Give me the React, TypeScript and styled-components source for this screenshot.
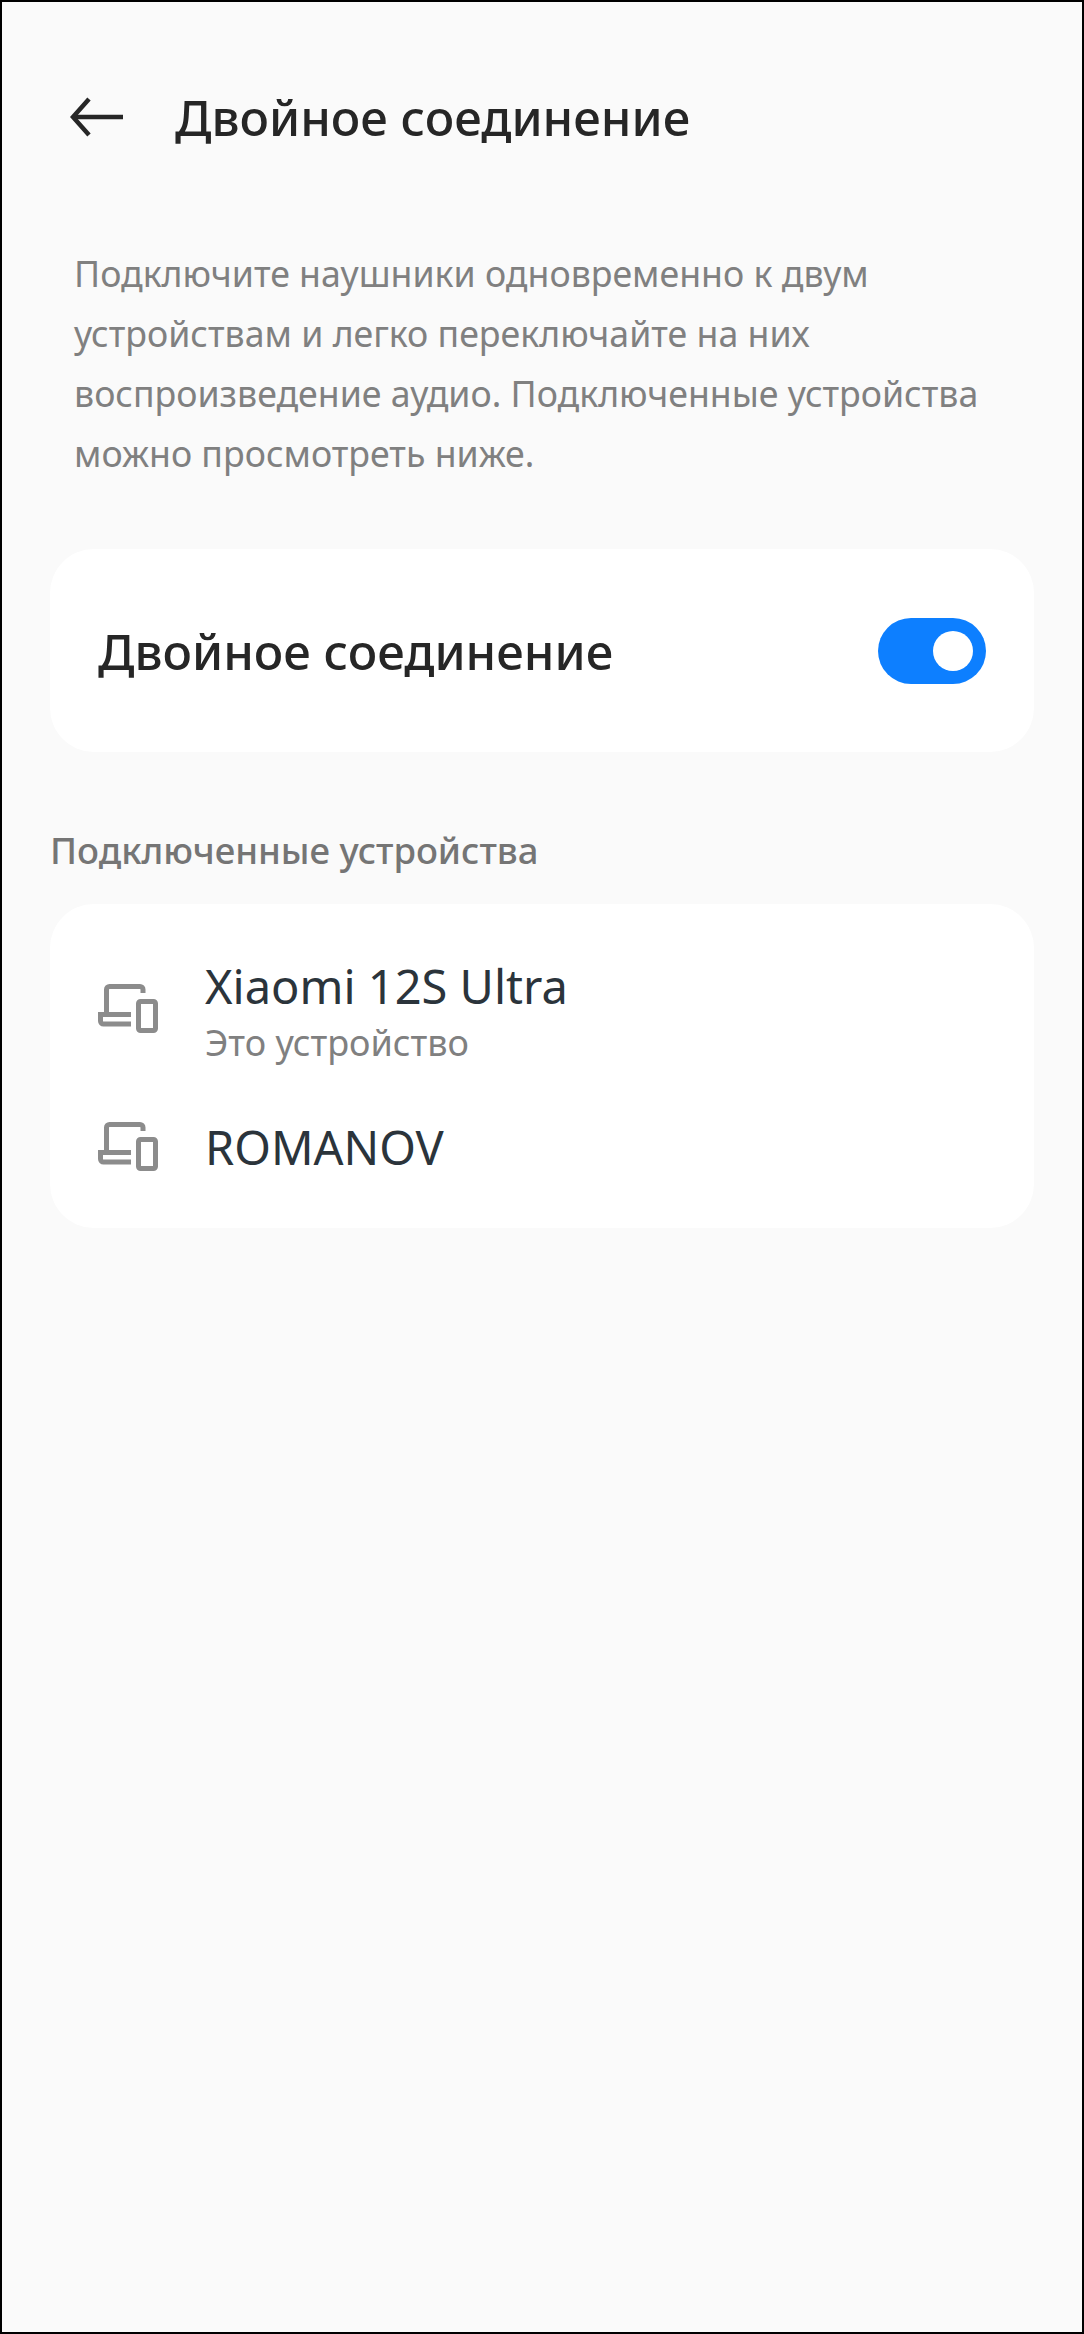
import styled, { createGlobalStyle } from 'styled-components';

const GlobalStyle = createGlobalStyle`
  html, body {
    margin: 0;
    padding: 0;
    background: #000;
  }
  * {
    box-sizing: border-box;
  }
`

const Screen = styled.div`
  width: 1084px;
  height: 2334px;
  border: 2px solid #000;
  background-color: #fafafa;
  font-family: "Noto Sans", "Open Sans", sans-serif;
  overflow: hidden;
`
const Header = styled.header`
  display: flex;
  align-items: center;
  height: 62px;
  margin-top: 84px;
  padding-left: 68px;
`
const BackIcon = styled.svg`
  width: 54px;
  height: 40px;
  margin-right: 51px;
  flex: none;
`
const Title = styled.h1`
  margin: 0;
  font-size: 49px;
  line-height: 62px;
  font-weight: 500;
  color: #262626;
`
const Description = styled.p`
  margin: 95px 0 0;
  padding: 0 50px 0 72px;
  font-size: 35.7px;
  line-height: 60px;
  font-weight: 400;
  color: #808080;
`
const Card = styled.section`
  margin: 0 48px;
  background-color: #fff;
  border-radius: 44px;
`
const SwitchCard = styled(Card)`
  display: flex;
  align-items: center;
  justify-content: space-between;
  height: 203px;
  margin-top: 66px;
  padding: 0 48px;
`
const SwitchLabel = styled.span`
  font-size: 49px;
  font-weight: 500;
  color: #262626;
`
const Toggle = styled.div`
  display: flex;
  align-items: center;
  justify-content: flex-end;
  width: 108px;
  height: 66px;
  padding-right: 13px;
  border-radius: 33px;
  background-color: #0d7fff;
`
const Knob = styled.div`
  width: 40px;
  height: 40px;
  border-radius: 50%;
  background-color: #fff;
`
const SectionLabel = styled.h2`
  margin: 73px 0 29px;
  padding-left: 48px;
  font-size: 36.5px;
  line-height: 50px;
  font-weight: 500;
  color: #757575;
`
const DeviceCard = styled(Card)`
  display: flex;
  flex-direction: column;
  gap: 28px;
  height: 324px;
  padding: 50px 48px 0;
`
const DeviceRow = styled.div`
  display: flex;
  align-items: center;
  height: 110px;
`
const DeviceIcon = styled.svg`
  width: 60px;
  height: 50px;
  flex: none;
  margin-right: 47px;
`
const DeviceText = styled.div`
  display: flex;
  flex-direction: column;
`
const DeviceName = styled.span`
  font-size: 47px;
  line-height: 60px;
  font-weight: 400;
  color: #2b343b;
`
const DeviceNote = styled.span`
  margin: 2px 0 -6px;
  font-size: 36px;
  line-height: 50px;
  font-weight: 400;
  color: #808080;
`

const Devices = () => (
  <DeviceIcon viewBox="0 0 60 50" fill="none" stroke="#8c8c8c" strokeWidth="5">
    <path d="M45 9V5.500A3 3 0 0 0 42 2.500H11.500A3 3 0 0 0 8.500 5.500V30" />
    <path d="M33 30.500H2.500V37A3 3 0 0 0 5.500 40H33" />
    <rect x="40.500" y="17.500" width="17" height="29" rx="2" />
  </DeviceIcon>
)

const App = (): JSX.Element => {
  return (
    <Screen>
      <GlobalStyle />
      <Header>
        <BackIcon viewBox="0 0 54 40" fill="none" stroke="#262626" strokeWidth="4.500">
          <path d="M53 20H4" />
          <path d="M19 2L3 20L19 38" />
        </BackIcon>
        <Title>Двойное соединение</Title>
      </Header>
      <Description>
        Подключите наушники одновременно к двум устройствам и легко переключайте на них
        воспроизведение аудио. Подключенные устройства можно просмотреть ниже.
      </Description>
      <SwitchCard>
        <SwitchLabel>Двойное соединение</SwitchLabel>
        <Toggle>
          <Knob />
        </Toggle>
      </SwitchCard>
      <SectionLabel>Подключенные устройства</SectionLabel>
      <DeviceCard>
        <DeviceRow>
          <Devices />
          <DeviceText>
            <DeviceName>Xiaomi 12S Ultra</DeviceName>
            <DeviceNote>Это устройство</DeviceNote>
          </DeviceText>
        </DeviceRow>
        <DeviceRow>
          <Devices />
          <DeviceText>
            <DeviceName>ROMANOV</DeviceName>
          </DeviceText>
        </DeviceRow>
      </DeviceCard>
    </Screen>
  )
}

export default App;
